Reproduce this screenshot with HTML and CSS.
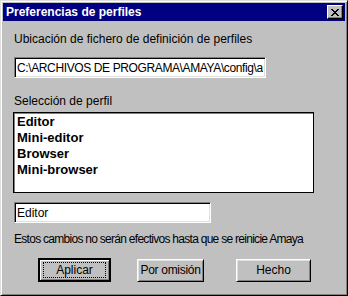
FILE: index.html
```html
<!DOCTYPE html>
<html>
    <head>
        <meta charset="utf-8" />
        <title>Preferencias de perfiles</title>
        <link rel="stylesheet" href="styles.css">
    </head>
    <body>
        <!-- ventana de diálogo -->
        <div class="window">
            <!-- barra de título -->
            <div class="titlebar">
                <span class="title">Preferencias de perfiles</span>
                <button type="button" class="close-btn">
                    <svg width="8" height="7" viewBox="0 0 8 7">
                        <path d="M0 0h2v1h1v1h2v-1h1v-1h2v1h-1v1h-1v1h-1v1h1v1h1v1h1v1h-2v-1h-1v-1h-2v1h-1v1h-2v-1h1v-1h1v-1h1v-1h-1v-1h-1v-1h-1z" fill="#000"/>
                    </svg>
                </button>
            </div>

            <div class="content">
                <div class="label label-path">Ubicación de fichero de definición de perfiles</div>
                <input type="text" class="field field-path" value="C:\ARCHIVOS DE PROGRAMA\AMAYA\config\amaya.profiles">

                <div class="label label-profile">Selección de perfil</div>
                <!-- lista de perfiles -->
                <div class="listbox">
                    <div class="item">Editor</div>
                    <div class="item">Mini-editor</div>
                    <div class="item">Browser</div>
                    <div class="item">Mini-browser</div>
                </div>

                <input type="text" class="field field-profile" value="Editor">

                <div class="label note">Estos cambios no serán efectivos hasta que se reinicie Amaya</div>

                <!-- botones inferiores -->
                <div class="buttons">
                    <button type="button" class="btn btn-apply default"><span class="focus">Aplicar</span></button>
                    <button type="button" class="btn btn-default">Por omisión</button>
                    <button type="button" class="btn btn-done">Hecho</button>
                </div>
            </div>
        </div>
    </body>
</html>
```

FILE: styles.css
```css
body {
    margin: 0;
    font-family: "Liberation Sans", Arial, sans-serif;
    font-size: 12px;
    background-color: #c0c0c0;
}

/* marco de la ventana estilo Windows 95 */
.window {
    width: 348px;
    height: 296px;
    box-sizing: border-box;
    padding: 2px;
    background-color: #c0c0c0;
    border: 1px solid;
    border-color: #dfdfdf #000 #000 #dfdfdf;
    box-shadow: inset 1px 1px #fff, inset -1px -1px #808080;
}

.titlebar {
    display: flex;
    align-items: center;
    justify-content: space-between;
    height: 18px;
    padding: 0 2px 0 3px;
    background-color: #000080;
}

.title {
    color: white;
    font-weight: bold;
    font-size: 12px;
}

.close-btn {
    width: 16px;
    height: 14px;
    padding: 0;
    display: flex;
    align-items: center;
    justify-content: center;
    background-color: #c0c0c0;
    border: 1px solid;
    border-color: #fff #000 #000 #fff;
    box-shadow: inset -1px -1px #808080;
}

.content {
    display: flex;
    flex-direction: column;
    align-items: flex-start;
    padding-left: 11px;
}

.label {
    line-height: 14px;
    color: #000;
    white-space: nowrap;
}

.label-path {
    margin-top: 11px;
}

.label-profile {
    margin-top: 16px;
}

/* campos de texto hundidos */
.field {
    height: 21px;
    box-sizing: border-box;
    margin: 0;
    padding: 0 2px;
    font-family: "Liberation Sans", Arial, sans-serif;
    font-size: 12px;
    color: #000;
    background-color: white;
    border: 1px solid;
    border-color: #808080 #fff #fff #808080;
    box-shadow: inset 1px 1px #000, inset -1px -1px #dfdfdf;
    outline: none;
}

.field-path {
    width: 252px;
    margin-top: 11px;
    letter-spacing: -0.38px;
}

.field-profile {
    width: 197px;
    margin-top: 9px;
}

.listbox {
    width: 301px;
    height: 81px;
    box-sizing: border-box;
    margin-top: 4px;
    margin-left: -1px;
    padding: 1px 0 0 3px;
    background-color: white;
    border: 1px solid #000;
    box-shadow: inset 1px 1px #808080;
}

.item {
    font-size: 13px;
    font-weight: bold;
    line-height: 16px;
}

.note {
    margin-top: 9px;
    letter-spacing: -0.72px;
}

.buttons {
    display: flex;
    align-items: center;
    margin-top: 12px;
    margin-left: 24px;
}

.btn {
    height: 23px;
    padding: 0;
    font-family: "Liberation Sans", Arial, sans-serif;
    font-size: 12px;
    color: #000;
    background-color: #c0c0c0;
    border: 1px solid;
    border-color: #fff #000 #000 #fff;
    box-shadow: inset 1px 1px #dfdfdf, inset -1px -1px #808080;
}

/* botón por defecto con contorno negro */
.btn.default {
    width: 73px;
    height: 24px;
    border-width: 2px;
    border-color: #000;
    box-shadow: inset 1px 1px #fff, inset -1px -1px #808080;
    display: flex;
    align-items: center;
    justify-content: center;
}

.focus {
    display: block;
    width: 61px;
    height: 14px;
    line-height: 14px;
    border: 1px dotted #000;
}

.btn-default {
    width: 67px;
    margin-left: 26px;
    letter-spacing: -0.3px;
}

.btn-done {
    width: 75px;
    margin-left: 32px;
}
```
